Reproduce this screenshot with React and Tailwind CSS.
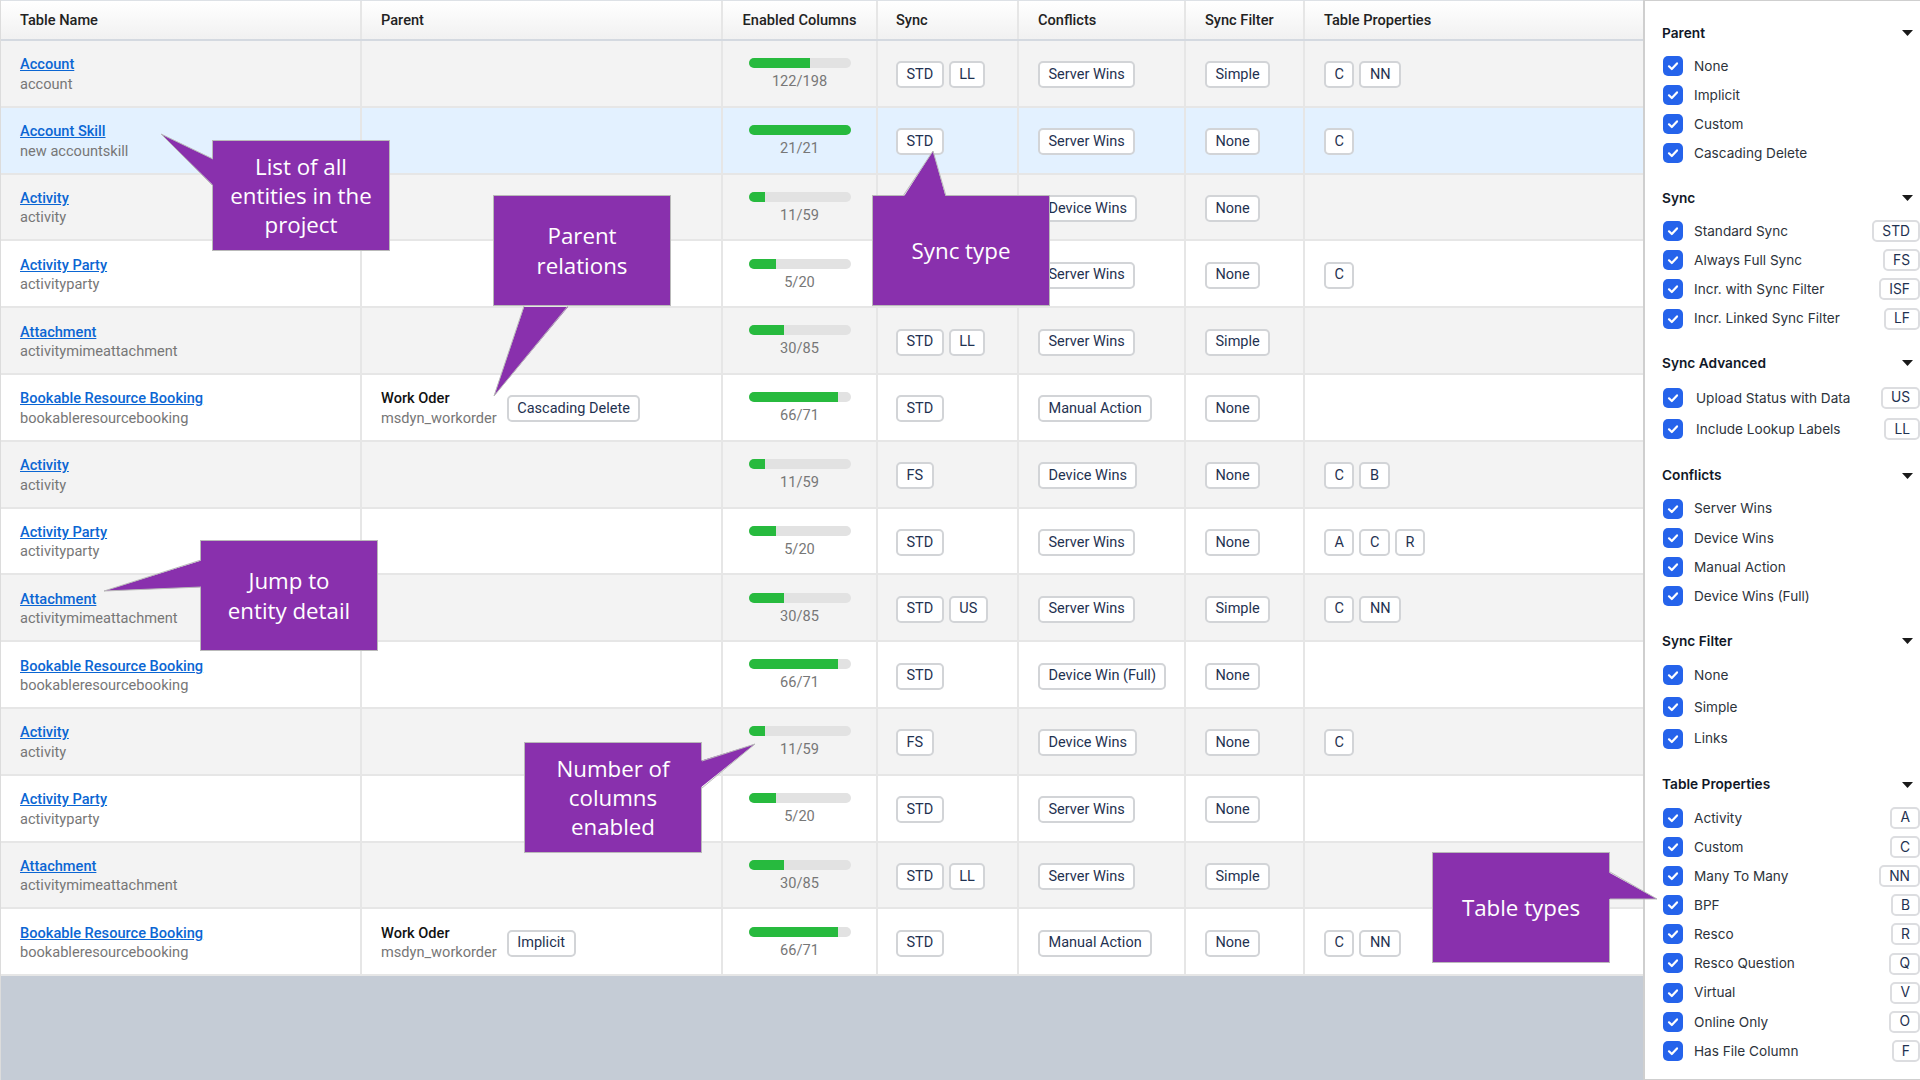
// App.jsx
import React from "react";

const rows = [
  { name: "Account", sub: "account", cols: "122/198", pct: 60, sync: ["STD", "LL"], conflict: "Server Wins", filter: "Simple", props: ["C", "NN"] },
  { name: "Account Skill", sub: "new accountskill", cols: "21/21", pct: 100, sync: ["STD"], conflict: "Server Wins", filter: "None", props: ["C"], active: true },
  { name: "Activity", sub: "activity", cols: "11/59", pct: 16, sync: ["FS"], conflict: "Device Wins", filter: "None", props: [] },
  { name: "Activity Party", sub: "activityparty", cols: "5/20", pct: 27, sync: ["STD"], conflict: "Server Wins", filter: "None", props: ["C"] },
  { name: "Attachment", sub: "activitymimeattachment", cols: "30/85", pct: 35, sync: ["STD", "LL"], conflict: "Server Wins", filter: "Simple", props: [] },
  { name: "Bookable Resource Booking", sub: "bookableresourcebooking", parent: "Cascading Delete", cols: "66/71", pct: 88, sync: ["STD"], conflict: "Manual Action", filter: "None", props: [] },
  { name: "Activity", sub: "activity", cols: "11/59", pct: 16, sync: ["FS"], conflict: "Device Wins", filter: "None", props: ["C", "B"] },
  { name: "Activity Party", sub: "activityparty", cols: "5/20", pct: 27, sync: ["STD"], conflict: "Server Wins", filter: "None", props: ["A", "C", "R"] },
  { name: "Attachment", sub: "activitymimeattachment", cols: "30/85", pct: 35, sync: ["STD", "US"], conflict: "Server Wins", filter: "Simple", props: ["C", "NN"] },
  { name: "Bookable Resource Booking", sub: "bookableresourcebooking", cols: "66/71", pct: 88, sync: ["STD"], conflict: "Device Win (Full)", filter: "None", props: [] },
  { name: "Activity", sub: "activity", cols: "11/59", pct: 16, sync: ["FS"], conflict: "Device Wins", filter: "None", props: ["C"] },
  { name: "Activity Party", sub: "activityparty", cols: "5/20", pct: 27, sync: ["STD"], conflict: "Server Wins", filter: "None", props: [] },
  { name: "Attachment", sub: "activitymimeattachment", cols: "30/85", pct: 35, sync: ["STD", "LL"], conflict: "Server Wins", filter: "Simple", props: [] },
  { name: "Bookable Resource Booking", sub: "bookableresourcebooking", parent: "Implicit", cols: "66/71", pct: 88, sync: ["STD"], conflict: "Manual Action", filter: "None", props: ["C", "NN"] },
];

const sections = [
  { title: "Parent", items: [["None"], ["Implicit"], ["Custom"], ["Cascading Delete"]] },
  { title: "Sync", items: [["Standard Sync", "STD"], ["Always Full Sync", "FS"], ["Incr. with Sync Filter", "ISF"], ["Incr. Linked Sync Filter", "LF"]] },
  { title: "Sync Advanced", wide: true, tall: true, items: [["Upload Status with Data", "US"], ["Include Lookup Labels", "LL"]] },
  { title: "Conflicts", items: [["Server Wins"], ["Device Wins"], ["Manual Action"], ["Device Wins (Full)"]] },
  { title: "Sync Filter", tall: true, items: [["None"], ["Simple"], ["Links"]] },
  {
    title: "Table Properties",
    items: [["Activity", "A"], ["Custom", "C"], ["Many To Many", "NN"], ["BPF", "B"], ["Resco", "R"], ["Resco Question", "Q"], ["Virtual", "V"], ["Online Only", "O"], ["Has File Column", "F"]],
  },
];

const gridCols = "grid grid-cols-[361px_361px_155px_141px_167px_119px_1fr]";
const cell = "flex items-center border-r-2 border-[#e6e6e6]";

function Chip({ children }) {
  return (
    <span className="inline-flex h-[27px] items-center whitespace-nowrap rounded-[5px] border-2 border-[#d2d4d7] bg-white px-[8.5px] text-[14.5px] text-[#1f3251]">
      {children}
    </span>
  );
}

function Row({ row, index }) {
  const bg = row.active ? "bg-[#e3f1ff]" : index % 2 === 0 ? "bg-[#f3f3f3]" : "bg-white";
  return (
    <div className={`${gridCols} h-[66.8px] border-b-2 border-[#e6e6e6] ${bg}`}>
      <div className={`${cell} pl-[19px] pt-[3px]`}>
        <div className="text-[14.6px] leading-[19.5px]">
          <a href="#" className="block font-medium text-[#0b66d3] underline">{row.name}</a>
          <div className="text-[#777777]">{row.sub}</div>
        </div>
      </div>
      <div className={`${cell} pl-[19px] pt-[3px]`}>
        {row.parent && (
          <div className="flex items-center gap-[10px]">
            <div className="text-[14.6px] leading-[19.5px]">
              <div className="font-medium text-[#111111]">Work Oder</div>
              <div className="text-[#777777]">msdyn_workorder</div>
            </div>
            <Chip>{row.parent}</Chip>
          </div>
        )}
      </div>
      <div className={`${cell} flex-col justify-center gap-[4px] pt-[3px]`}>
        <div className="h-2.5 w-[102px] overflow-hidden rounded-full bg-[#e2e2e2]">
          <div className="h-full bg-[#27ba3e]" style={{ width: `${row.pct}%` }} />
        </div>
        <div className="text-[14.6px] leading-[19.5px] text-[#777777]">{row.cols}</div>
      </div>
      <div className={`${cell} gap-[5px] pl-[18px] pt-[3px]`}>
        {row.sync.map((s) => <Chip key={s}>{s}</Chip>)}
      </div>
      <div className={`${cell} pl-[19px] pt-[3px]`}>
        <Chip>{row.conflict}</Chip>
      </div>
      <div className={`${cell} pl-[19px] pt-[3px]`}>
        <Chip>{row.filter}</Chip>
      </div>
      <div className="flex items-center gap-[5px] pl-[19px] pt-[3px]">
        {row.props.map((p) => <Chip key={p}>{p}</Chip>)}
      </div>
    </div>
  );
}

function Checkbox() {
  return (
    <span className="ml-px flex h-5 w-5 shrink-0 items-center justify-center rounded-[5px] bg-[#2563eb]">
      <svg width="12" height="12" viewBox="0 0 12 12" fill="none">
        <path d="M2 6.3 L4.8 9 L10 3.4" stroke="white" strokeWidth="2.2" strokeLinecap="round" strokeLinejoin="round" />
      </svg>
    </span>
  );
}

function FilterSection({ section }) {
  return (
    <div className="mb-[20.2px]">
      <div className="mb-[8.4px] flex h-5 items-center justify-between pr-[7px]">
        <span className="text-[13.7px] font-semibold text-[#111827]">{section.title}</span>
        <svg width="11" height="6" viewBox="0 0 11 6"><path d="M0 0 H11 L5.5 6 Z" fill="#1a1a1a" /></svg>
      </div>
      {section.items.map(([label, tag]) => (
        <div key={label} className={`flex items-center justify-between ${section.tall ? "h-[31.8px]" : "h-[29.17px]"}`}>
          <div className={`flex items-center ${section.wide ? "gap-[13px]" : "gap-[11px]"}`}>
            <Checkbox />
            <span className="text-[13.6px] text-[#2d333b]">{label}</span>
          </div>
          {tag && (
            <span className="inline-flex h-[22px] items-center rounded-[5px] border-2 border-[#dcdde0] bg-white px-[8px] text-[13.8px] text-[#1f3251]">
              {tag}
            </span>
          )}
        </div>
      ))}
    </div>
  );
}

// tail points are relative to the callout box
function Callout({ className, tail, edges, lines }) {
  return (
    <div className={`absolute h-[111px] w-[178px] border border-[#b9b9b9] bg-[#8930ad] ${className}`}>
      <svg className="absolute left-0 top-0 h-full w-full overflow-visible">
        <polygon points={tail} fill="#8930ad" />
        <polyline points={edges} fill="none" stroke="#b9b9b9" strokeWidth="1" />
      </svg>
      <div className="relative flex h-full flex-col items-center justify-center text-center [font-family:'Open_Sans',sans-serif] text-[22.3px] leading-[29.3px] text-white">
        {lines.map((l) => <div key={l}>{l}</div>)}
      </div>
    </div>
  );
}

export default function App() {
  return (
    <div className="relative flex h-[1080px] w-[1920px] overflow-hidden [font-family:Roboto,sans-serif]">
      <div className="flex-1 border-l border-[#dcdcdc] bg-[#c5ccd6]">
        <div className={`${gridCols} h-[41px] border-y border-b-2 border-t-[#dde1e6] border-b-[#d4d9e0] bg-gradient-to-b from-white to-[#f1f1f1] text-[14.6px] font-medium text-[#222222]`}>
          <div className={`${cell} pl-[19px] pt-px`}>Table Name</div>
          <div className={`${cell} pl-[19px] pt-px`}>Parent</div>
          <div className={`${cell} justify-center pt-px`}>Enabled Columns</div>
          <div className={`${cell} pl-[18px] pt-px`}>Sync</div>
          <div className={`${cell} pl-[19px] pt-px`}>Conflicts</div>
          <div className={`${cell} pl-[19px] pt-px`}>Sync Filter</div>
          <div className="flex items-center pl-[19px] pt-px">Table Properties</div>
        </div>
        {rows.map((row, i) => <Row key={i} row={row} index={i} />)}
      </div>

      <aside className="h-full w-[277px] shrink-0 overflow-hidden border-y border-l-2 border-[#cfcfcf] bg-white pl-[17px] pt-[22px] [font-family:Inter,sans-serif]">
        {sections.map((s) => <FilterSection key={s.title} section={s} />)}
      </aside>

      <Callout
        className="left-[212px] top-[140px]"
        tail="2,19 -52,-7 2,46"
        edges="0,18 -52,-7 0,45"
        lines={["List of all", "entities in the", "project"]}
      />
      <Callout
        className="left-[493px] top-[195px]"
        tail="30,111 0,200 74,111"
        edges="30,110 0,200 74,110"
        lines={["Parent", "relations"]}
      />
      <Callout
        className="left-[872px] top-[195px]"
        tail="30,2 60,-45 73,2"
        edges="30,0 60,-45 73,0"
        lines={["Sync type"]}
      />
      <Callout
        className="left-[200px] top-[540px]"
        tail="2,19 -97,50 2,46"
        edges="0,19 -97,50 0,46"
        lines={["Jump to", "entity detail"]}
      />
      <Callout
        className="left-[524px] top-[742px]"
        tail="175,18 230,1 175,45"
        edges="177,18 230,1 177,45"
        lines={["Number of", "columns", "enabled"]}
      />
      <Callout
        className="left-[1432px] top-[852px]"
        tail="175,19 224,46 175,46"
        edges="177,19 224,46 177,46"
        lines={["Table types"]}
      />
    </div>
  );
}
